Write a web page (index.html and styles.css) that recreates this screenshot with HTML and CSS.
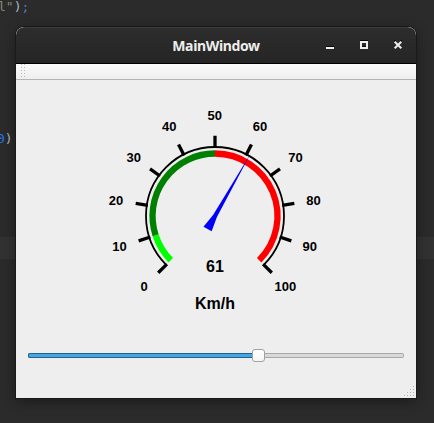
FILE: index.html
```
<!DOCTYPE html>
<html lang="en">
<head>
<meta charset="utf-8">
<title>MainWindow</title>
<link rel="stylesheet" href="styles.css">
</head>
<body>
<div class="editor">
  <div class="code code-first"><span class="string">l"</span>)<span class="semi">;</span></div>
  <div class="code code-second"><span class="number">0</span>)</div>
  <div class="current-line"></div>
</div>
<main class="window">
  <header class="titlebar">
    <h1>MainWindow</h1>
    <div class="controls">
      <svg width="8" height="10" viewBox="0 0 8 10"><path class="shade" d="M0 6.5h8"/><path d="M0 8h8"/></svg>
      <svg width="8" height="10" viewBox="0 0 8 10"><path class="shade" d="M0 .5h8M2 6.5h4"/><path d="M1 2h6v6H1z"/></svg>
      <svg width="8" height="10" viewBox="0 0 8 10"><path class="shade" d="M0 .8h2M6 .8h2"/><path d="M.7 1.7l6.6 6.6M7.3 1.7L.7 8.3"/></svg>
    </div>
  </header>
  <div class="toolbar"><span class="grip"></span></div>
  <section class="content">
    <svg class="gauge" width="400" height="240" viewBox="15 80 400 240">
      <path class="rim" d="M166.2 264.8A69 69 0 1 1 263.8 264.8"/>
      <g class="ticks">
        <path transform="rotate(-135 215 216)" d="M215 135.7v12.3"/>
        <path transform="rotate(-108 215 216)" d="M215 135.7v12.3"/>
        <path transform="rotate(-81 215 216)" d="M215 135.7v12.3"/>
        <path transform="rotate(-54 215 216)" d="M215 135.7v12.3"/>
        <path transform="rotate(-27 215 216)" d="M215 135.7v12.3"/>
        <path d="M215 135.7v12.3"/>
        <path transform="rotate(27 215 216)" d="M215 135.7v12.3"/>
        <path transform="rotate(54 215 216)" d="M215 135.7v12.3"/>
        <path transform="rotate(81 215 216)" d="M215 135.7v12.3"/>
        <path transform="rotate(108 215 216)" d="M215 135.7v12.3"/>
        <path transform="rotate(135 215 216)" d="M215 135.7v12.3"/>
      </g>
      <path class="band lime" d="M170.8 260.2A62.5 62.5 0 0 1 155.6 235.3"/>
      <path class="band green" d="M155.6 235.3A62.5 62.5 0 0 1 215 153.5"/>
      <path class="band red" d="M215 153.5A62.5 62.5 0 0 1 259.2 260.2"/>
      <path class="needle" transform="rotate(29.7 215 216)" d="M210.3 231h9.4L217.2 216 215 144 212.8 216z"/>
      <g class="labels">
        <text x="144" y="291">0</text>
        <text x="119.5" y="251">10</text>
        <text x="116" y="205">20</text>
        <text x="133.7" y="162">30</text>
        <text x="169.2" y="131">40</text>
        <text x="214.7" y="120">50</text>
        <text x="260" y="131">60</text>
        <text x="295.5" y="162">70</text>
        <text x="313.5" y="205">80</text>
        <text x="309.7" y="251">90</text>
        <text x="285.3" y="291">100</text>
      </g>
      <g class="reading"><text x="215" y="272">61</text><text x="215" y="309">Km/h</text></g>
    </svg>
    <div class="slider"><div class="filled"></div><div class="handle"></div><div class="rest"></div></div>
    <svg class="resize" width="10" height="10" viewBox="0 0 10 10"><path d="M9 0h1v1H9zM6 3h1v1H6zM9 3h1v1H9zM3 6h1v1H3zM6 6h1v1H6zM9 6h1v1H9zM0 9h1v1H0zM3 9h1v1H3zM6 9h1v1H6zM9 9h1v1H9z"/></svg>
  </section>
</main>
</body>
</html>
```
FILE: styles.css
```
* { box-sizing: border-box; }
body {
  margin: 0;
  width: 434px;
  height: 423px;
  overflow: hidden;
  position: relative;
  background: #2b2b2b;
  font-family: "Liberation Sans", sans-serif;
}
.editor { height: 423px; }
.code {
  height: 22px;
  font: 13px/22px "DejaVu Sans Mono", monospace;
  color: #a9b7c6;
}
.code-first { height: 18px; line-height: 14px; text-indent: -2px; }
.code-second { margin-top: 110px; text-indent: -3px; }
.string { color: #8a8a72; }
.semi { color: #557bbf; }
.number { color: #2878f0; }
.current-line { margin-top: 87px; height: 22px; background: #323232; }
.window {
  position: absolute;
  left: 16px;
  top: 27px;
  width: 400px;
  height: 371px;
  border-radius: 8px 8px 0 0;
  display: flex;
  flex-direction: column;
  overflow: hidden;
  background: #eeeeee;
  box-shadow: 0 0 0 1px #191919, 0 3px 14px rgba(0, 0, 0, .4);
}
.titlebar {
  height: 37px;
  flex: none;
  display: grid;
  grid-template-columns: 1fr auto 1fr;
  align-items: center;
  background: linear-gradient(#2d2d2d, #252525);
  border-top: 1px solid #3a3a3a;
  border-bottom: 1px solid #000;
  border-radius: 8px 8px 0 0;
}
h1 {
  grid-column: 2;
  margin: 1px 0 0;
  font: bold 14px/20px "Noto Sans", sans-serif;
  letter-spacing: -.35px;
  color: #eeeeec;
}
.controls {
  display: flex;
  justify-content: flex-end;
  gap: 26px;
  padding-right: 14px;
  margin-top: -1px;
}
.controls path { fill: none; stroke: #eeeeec; stroke-width: 2; }
.controls .shade { stroke: #080808; stroke-width: 1; }
.toolbar {
  height: 16px;
  flex: none;
  padding-left: 5px;
  background: linear-gradient(#fbfbfb, #eeeeee);
  border-bottom: 1px solid #b4b4b4;
}
.grip {
  display: block;
  width: 5px;
  height: 15px;
  background: radial-gradient(circle at .5px .5px, #b8b8b8 .6px, transparent .7px) 0 0 / 3px 3px;
}
.content {
  flex: 1;
  display: flex;
  flex-direction: column;
  background: #eeeeee;
}
.gauge { display: block; flex: none; transform: translateX(-1px); }
.rim { fill: none; stroke: #000; stroke-width: 1.8; }
.ticks { stroke: #000; stroke-width: 3.3; }
.band { fill: none; stroke-width: 6.3; }
.lime { stroke: #00ff00; }
.green { stroke: #008000; }
.red { stroke: #ff0000; }
.needle { fill: #0000ff; }
.labels, .reading { text-anchor: middle; font-weight: bold; fill: #000; }
.labels { font-size: 13px; }
.reading { font-size: 16px; }
.slider {
  display: flex;
  align-items: center;
  height: 13px;
  margin: 29px 12px 0;
}
.filled {
  width: 224px;
  height: 5px;
  background: #46a6e4;
  border: 1px solid #21638f;
  border-right: 0;
  border-radius: 2px 0 0 2px;
}
.handle {
  width: 13px;
  height: 13px;
  background: linear-gradient(#fff, #f5f5f5);
  border: 1px solid #a2a2a2;
  border-radius: 3px;
}
.rest {
  flex: 1;
  height: 5px;
  background: #d8d8d8;
  border: 1px solid #a8a8a8;
  border-left: 0;
  border-radius: 0 2px 2px 0;
}
.resize { align-self: flex-end; margin: auto 2px 2px 0; }
.resize path { fill: #b5b5b5; }
```
